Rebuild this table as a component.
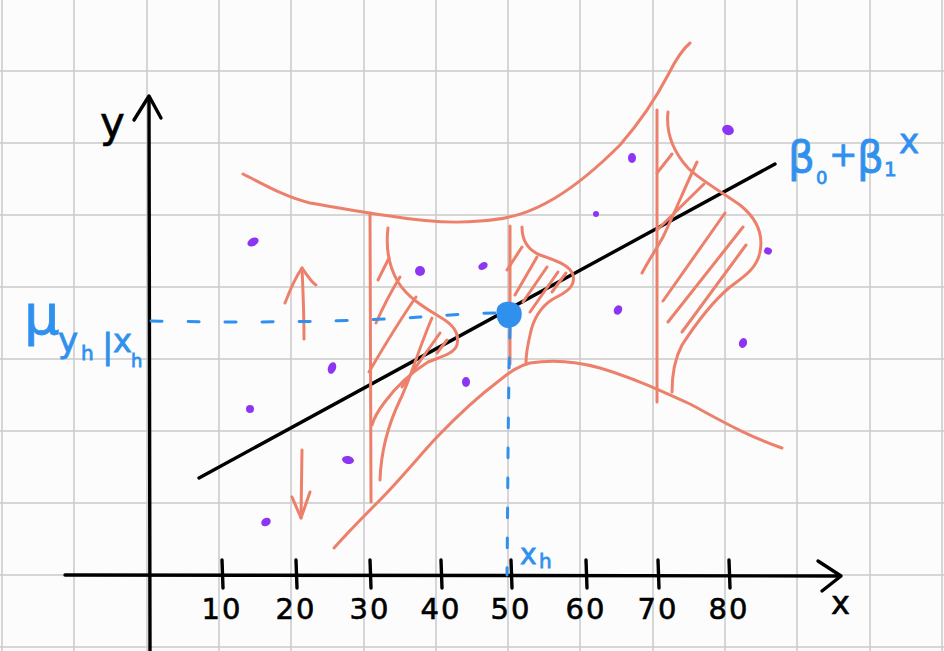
import React from 'react';

const ORANGE = '#ec806b';
const BLUE = '#3090ee';
const PURPLE = '#8d35f2';

const gridX = [2, 74, 147, 219, 291, 364, 436, 508, 580, 653, 725, 797, 870, 942];
const gridY = [-1, 71, 143, 215, 287, 359, 431, 503, 575, 647];

const ticks = [
  { x: 222, label: '10' },
  { x: 296, label: '20' },
  { x: 370, label: '30' },
  { x: 441, label: '40' },
  { x: 511, label: '50' },
  { x: 586, label: '60' },
  { x: 658, label: '70' },
  { x: 729, label: '80' },
];

// scattered observations
const dots = [
  { cx: 253, cy: 242, rx: 6, ry: 4, r: -30 },
  { cx: 420, cy: 271, rx: 5, ry: 5, r: 0 },
  { cx: 483, cy: 266, rx: 5, ry: 3.5, r: -30 },
  { cx: 332, cy: 368, rx: 4, ry: 6, r: 20 },
  { cx: 466, cy: 382, rx: 4, ry: 5, r: 0 },
  { cx: 250, cy: 409, rx: 4, ry: 4, r: 0 },
  { cx: 348, cy: 460, rx: 6, ry: 4, r: 10 },
  { cx: 266, cy: 522, rx: 5, ry: 4, r: -30 },
  { cx: 632, cy: 158, rx: 4, ry: 5, r: 0 },
  { cx: 728, cy: 130, rx: 6, ry: 5, r: 20 },
  { cx: 596, cy: 214, rx: 3, ry: 3, r: 0 },
  { cx: 618, cy: 310, rx: 4, ry: 5, r: 30 },
  { cx: 768, cy: 251, rx: 4, ry: 3.5, r: 20 },
  { cx: 743, cy: 343, rx: 4, ry: 5, r: 20 },
];

// orange strokes: band edges, verticals, bell curves and hatching
const orangePaths = [
  // upper band
  'M243,174 C265,185 285,197 310,203 C340,208 360,212 390,216 C420,221 450,224 480,221 C510,219 530,213 555,198 C580,183 600,165 620,145 C640,122 655,100 668,75 C677,57 684,48 690,43',
  // lower band
  'M334,548 C350,530 365,515 377,503 C400,480 420,455 437,437 C460,413 480,395 500,380 C510,372 518,366 530,363 C550,360 575,361 600,368 C630,377 655,388 690,404 C720,420 745,435 782,448',
  // verticals
  'M370,213 L371,502',
  'M510,226 L510,364',
  'M657,110 L657,402',
  // left bell
  'M388,228 C386,245 388,265 398,282 C408,298 425,308 440,317 C452,324 460,332 457,345 C454,354 440,357 428,362 C412,372 395,388 384,403 C378,411 374,418 372,425',
  'M378,280 L389,258',
  'M376,323 C383,307 392,290 400,277',
  'M369,372 C383,348 400,320 416,297',
  'M380,480 C381,450 388,425 400,400 C410,380 420,345 432,318',
  'M402,387 C415,368 428,350 440,333',
  'M437,353 L447,340',
  // middle bell
  'M522,227 C522,240 528,250 540,255 C555,260 570,265 573,275 C576,287 565,293 553,299 C540,307 533,320 530,335 C527,348 526,356 526,363',
  'M507,270 L522,247',
  'M515,295 L537,257',
  'M523,302 L547,267',
  'M530,312 L558,272',
  'M552,292 L566,273',
  // right bell
  'M668,112 C666,130 670,148 688,168 C700,180 722,192 740,205 C755,217 764,232 760,252 C757,268 745,276 730,287 C712,302 695,325 682,345 C674,360 672,375 672,392',
  'M657,173 L672,154',
  'M642,273 C650,258 657,248 663,237 C675,212 686,185 697,162',
  'M657,230 L704,184',
  'M663,301 L725,213',
  'M668,322 L743,227',
  'M682,332 L746,245',
  // arrows
  'M302,268 C303,290 304,315 304,339',
  'M285,303 C290,290 297,275 302,268 C307,275 311,282 316,285',
  'M302,450 L301,518',
  'M292,497 L301,518 L310,492',
];

export default function App() {
  const hand = '"DejaVu Sans", "Liberation Sans", sans-serif';

  return (
    <div className="w-[944px] h-[651px] bg-[#fcfcfc] overflow-hidden">
      <svg width="944" height="651" viewBox="0 0 944 651" className="block">
        {/* grid */}
        {gridX.map((x) => (
          <line key={'gx' + x} x1={x} y1={0} x2={x} y2={651} stroke="#cacaca" strokeWidth="1.5" />
        ))}
        {gridY.map((y) => (
          <line key={'gy' + y} x1={0} y1={y} x2={944} y2={y} stroke="#cacaca" strokeWidth="1.5" />
        ))}

        {/* axes */}
        <g stroke="#000" strokeWidth="3.4" fill="none" strokeLinecap="round" strokeLinejoin="round">
          <path d="M149,97 L150,651" />
          <path d="M134,120 L149,96 L161,118" />
          <path d="M65,575 L840,576" />
          <path d="M818,561 L841,576 L822,591" />
          {ticks.map((t) => (
            <path key={t.x} d={`M${t.x},560 L${t.x + 1},588`} />
          ))}
          <path d="M199,478 L775,164" />
        </g>

        {/* tick labels */}
        <g fill="#000" stroke="#000" strokeWidth="0.6" fontFamily={hand}>
          {ticks.map((t) => (
            <text key={'l' + t.x} x={t.x} y={619} textAnchor="middle" fontSize="29" letterSpacing="2">
              {t.label}
            </text>
          ))}
          <text x={831} y={614} fontSize="32">x</text>
          <text x={100} y={137} fontSize="42">y</text>
        </g>

        {/* orange strokes */}
        <g stroke={ORANGE} strokeWidth="3" fill="none" strokeLinecap="round" strokeLinejoin="round">
          {orangePaths.map((d, i) => (
            <path key={i} d={d} />
          ))}
        </g>

        {/* data points */}
        {dots.map((d, i) => (
          <ellipse
            key={i}
            cx={d.cx}
            cy={d.cy}
            rx={d.rx}
            ry={d.ry}
            fill={PURPLE}
            transform={`rotate(${d.r} ${d.cx} ${d.cy})`}
          />
        ))}

        {/* blue guides */}
        <g stroke={BLUE} strokeWidth="3" fill="none" strokeLinecap="round">
          <path d="M151,321 C250,323 350,322 420,317 C460,314 485,313 500,313" strokeDasharray="11 26" />
          <path d="M510,328 C508,400 508,480 507,575" strokeDasharray="10 20" />
        </g>
        <path d="M497,308 C501,299 517,300 521,309 C524,319 518,328 508,328 C499,328 495,318 497,308 Z" fill={BLUE} />

        {/* blue labels */}
        <g fill={BLUE} stroke={BLUE} strokeWidth="0.8" fontFamily={hand}>
          <text x={788} y={172} fontSize="42">β</text>
          <text x={816} y={184} fontSize="18">0</text>
          <text x={829} y={166} fontSize="34">+</text>
          <text x={857} y={172} fontSize="42">β</text>
          <text x={884} y={176} fontSize="20">1</text>
          <text x={899} y={153} fontSize="34">x</text>

          <text x={24} y={334} fontSize="56">μ</text>
          <text x={58} y={352} fontSize="34">y</text>
          <text x={81} y={360} fontSize="20">h</text>
          <text x={102} y={358} fontSize="34">|</text>
          <text x={113} y={352} fontSize="32">x</text>
          <text x={131} y={367} fontSize="18">h</text>

          <text x={520} y={564} fontSize="28">x</text>
          <text x={539} y={568} fontSize="20">h</text>
        </g>
      </svg>
    </div>
  );
}
